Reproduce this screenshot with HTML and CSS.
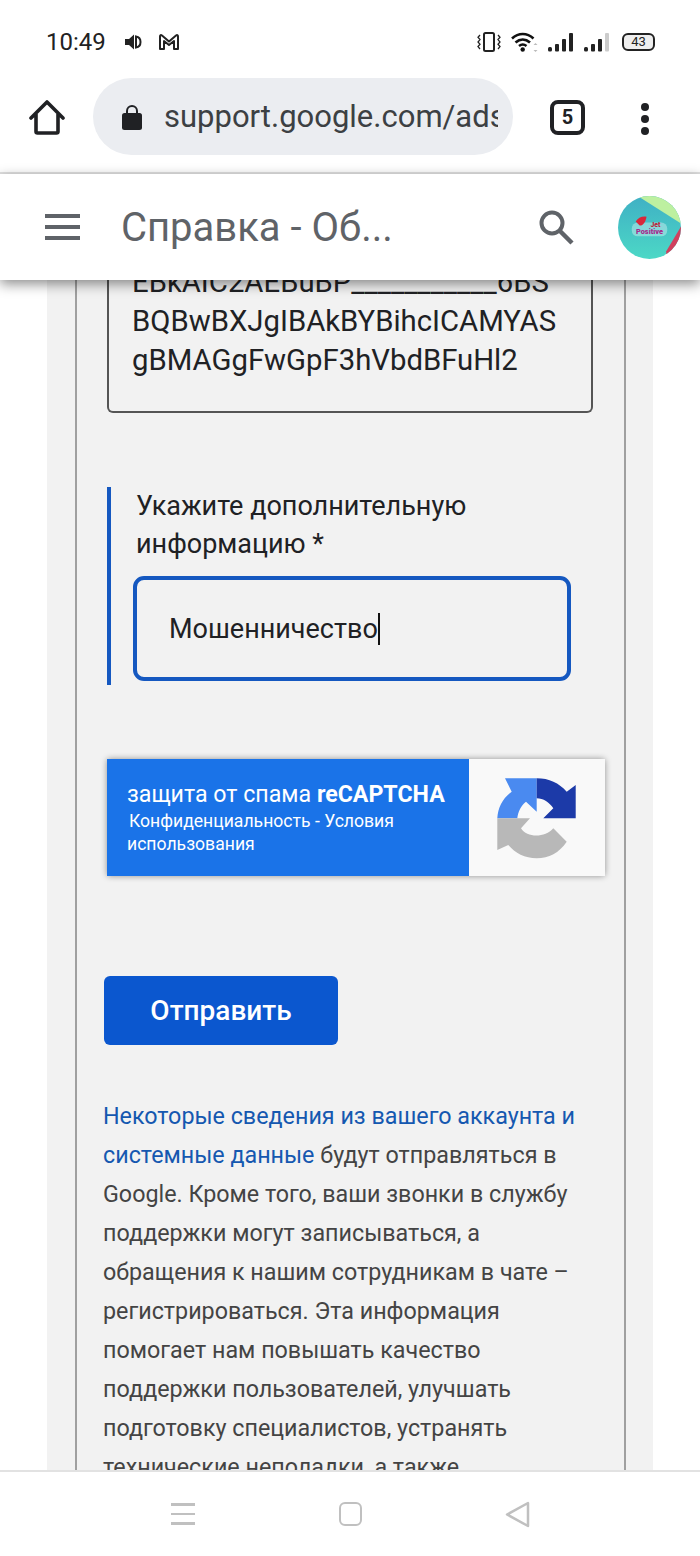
FILE: index.html
```html
<!DOCTYPE html>
<html lang="ru">
<head>
    <meta charset="UTF-8">
    <meta name="viewport" content="width=device-width, initial-scale=1.0">
    <title>Справка</title>
    <link rel="stylesheet" href="styles.css">
</head>
<body>
    <div class="phone">
        <!-- Status bar -->
        <div class="status-bar">
            <span class="time">10:49</span>
            <svg class="ic-sound" viewBox="0 0 18 18"><path d="M0 6h4l5-4.500v15L4 12H0z" fill="#222"/><path d="M11 3.500c6 1 6 10 0 11z" fill="none" stroke="#222" stroke-width="2"/></svg>
            <svg class="ic-gmail" viewBox="0 0 22 18"><path d="M2 16V3.500c0-1.500 1-1.700 2-1l7 6 7-6c1-.7 2-.5 2 1V16h-4V8l-5 4-5-4v8z" fill="none" stroke="#222" stroke-width="2" stroke-linejoin="round"/></svg>
            <span class="status-right">
                <svg class="ic-vibrate" viewBox="0 0 24 20"><rect x="7" y="1" width="10" height="18" rx="1.500" fill="none" stroke="#222" stroke-width="2"/><path d="M3 3l-2 2.300 2 2.300-2 2.400 2 2.300-2 2.300 2 2.400M21 3l2 2.300-2 2.300 2 2.400-2 2.300 2 2.300-2 2.400" fill="none" stroke="#222" stroke-width="1.300"/></svg>
                <svg class="ic-wifi" viewBox="0 0 27 20"><path d="M1 6.500c6.500-6 15-6 21.500 0M4.500 10.500c4.500-4 10-4 14.500 0M8 14c2.500-2 5-2 7.500 0" fill="none" stroke="#111" stroke-width="2.600"/><circle cx="11.700" cy="17.500" r="2.200" fill="#111"/><path d="M24.500 11l-2 2h4zM24.500 20l-2-2h4z" fill="#bbb"/></svg>
                <svg class="ic-signal" viewBox="0 0 26 20"><rect x="0" y="15" width="4" height="4.500" rx="1.500" fill="#222"/><rect x="7" y="12" width="4" height="7.500" rx="1" fill="#222"/><rect x="14" y="7" width="4" height="12.500" rx="1" fill="#222"/><rect x="21" y="1" width="4" height="18.500" rx="1" fill="#222"/></svg>
                <svg class="ic-signal" viewBox="0 0 26 20"><rect x="0" y="15" width="4" height="4.500" rx="1.500" fill="#222"/><rect x="7" y="12" width="4" height="7.500" rx="1" fill="#222"/><rect x="14" y="7" width="4" height="12.500" rx="1" fill="#222"/><rect x="21" y="1" width="4" height="18.500" rx="1" fill="#ccc"/></svg>
                <span class="battery">43</span>
            </span>
        </div>

        <!-- Browser toolbar -->
        <div class="toolbar">
            <svg class="ic-home" viewBox="0 0 36 36"><path d="M2 18L18 2l16 16M7 14v17.500c0 1 .5 1.500 1.500 1.500h19c1 0 1.500-.5 1.500-1.500V14" fill="none" stroke="#202124" stroke-width="3.600" stroke-linejoin="round" stroke-linecap="round"/></svg>
            <div class="omnibox">
                <svg class="ic-lock" viewBox="0 0 20 26"><path d="M5 11V7a5 5 0 0 1 10 0v4" fill="none" stroke="#202124" stroke-width="2"/><rect x="0" y="9" width="20" height="17" rx="2.500" fill="#202124"/></svg>
                <span class="url">support.google.com/ads</span>
            </div>
            <span class="tabs-count">5</span>
            <span class="dots"><i></i><i></i><i></i></span>
        </div>

        <!-- Help center header -->
        <header class="app-bar">
            <span class="burger"><i></i><i></i><i></i></span>
            <span class="app-title">Справка - Об...</span>
            <svg class="ic-search" viewBox="0 0 36 36"><circle cx="14" cy="14" r="10.500" fill="none" stroke="#5f6368" stroke-width="4"/><path d="M22 22l12 12" stroke="#5f6368" stroke-width="4.500"/></svg>
            <div class="avatar">
                <svg viewBox="0 0 64 64"><defs><linearGradient id="ava" x1="0" y1="0" x2="0" y2="1"><stop offset="0" stop-color="#3fb0c4"/><stop offset="1" stop-color="#4cd8c6"/></linearGradient></defs><rect width="64" height="64" fill="url(#ava)"/><path d="M20 0h44v28z" fill="#bdf0a0"/><path d="M64 31v33H49v-8z" fill="#d0405e"/><rect x="14" y="27" width="36" height="14" rx="6" fill="#fff" fill-opacity=".35"/><path d="M18 26c2-4 7-6 11-5-1 5-3 9-7 9z" fill="#d8283a"/><text x="33" y="31" class="logo-jet">Jet</text><text x="32" y="39" class="logo-pos">Positive</text></svg>
            </div>
        </header>

        <main class="content">
            <div class="panel">
                <div class="frame">
                    <div class="url-box">EBkAIC2AEBuBP___________6BS<br>BQBwBXJgIBAkBYBihcICAMYAS<br>gBMAGgFwGpF3hVbdBFuHl2</div>

                    <div class="field">
                        <label class="field-label">Укажите дополнительную информацию *</label>
                        <div class="input">Мошенничество<span class="caret"></span></div>
                    </div>

                    <div class="recaptcha">
                        <div class="recaptcha-text">
                            <div class="recaptcha-title">защита от спама <b>reCAPTCHA</b></div>
                            <div class="recaptcha-links"><span class="first-link">Конфиденциальность - Условия</span><br>использования</div>
                        </div>
                        <div class="recaptcha-logo">
                            <svg viewBox="0 0 80 81">
                                <path d="M.3 40.300C1 29 6 20 14.700 13.700L8 .3h31.700v33.400L29 23.700c-5 4-8 10-8.700 16.600z" fill="#4a8af0"/>
                                <path d="M39.700.3C52 .3 62 5 69.700 13.700L78.700 7v33.300H46.300l10-10c-4-6-10-10-16.600-10z" fill="#1c3aa8"/>
                                <path d="M.3 40.300H33L24 50.300C30 60 48 60 56.300 50.300l13.400 13.400C62 75 52 80.300 39.700 80.300 28 80.300 18 75 11.300 67L.3 72z" fill="#b8b8b8"/>
                            </svg>
                        </div>
                    </div>

                    <button class="submit">Отправить</button>

                    <p class="note"><a href="#">Некоторые сведения из вашего аккаунта и системные данные</a> будут отправляться в Google. Кроме того, ваши звонки в службу поддержки могут записываться, а обращения к нашим сотрудникам в чате – регистрироваться. Эта информация помогает нам повышать качество поддержки пользователей, улучшать подготовку специалистов, устранять технические неполадки, а также</p>
                </div>
            </div>
        </main>

        <!-- Android nav -->
        <nav class="nav-bar">
            <span class="nav-menu"><i></i><i></i><i></i></span>
            <span class="nav-square"></span>
            <svg class="nav-back" viewBox="0 0 25 27"><path d="M23 2v23L2 13.500z" fill="none" stroke="#c0c0c0" stroke-width="2.500" stroke-linejoin="round"/></svg>
        </nav>
    </div>
</body>
</html>
```

FILE: styles.css
```css
* {
    margin: 0;
    padding: 0;
    box-sizing: border-box;
    font-family: Roboto, Arial, sans-serif;
}

body {
    background: white;
}

.phone {
    width: 700px;
    height: 1556px;
    display: flex;
    flex-direction: column;
    overflow: hidden;
}

/* status bar */
.status-bar {
    height: 78px;
    flex-shrink: 0;
    display: flex;
    align-items: center;
    padding: 6px 45px 0 46px;
    color: #222;
}

.time {
    font-size: 24px;
    width: 79px;
}

.ic-sound {
    width: 18px;
    height: 18px;
}

.ic-gmail {
    width: 22px;
    height: 18px;
    margin-left: 15px;
}

.status-right {
    margin-left: auto;
    display: flex;
    align-items: center;
}

.ic-vibrate {
    width: 24px;
    height: 20px;
}

.ic-wifi {
    width: 27px;
    height: 20px;
    margin-left: 10px;
}

.ic-signal {
    width: 26px;
    height: 20px;
    margin-left: 10px;
}

.battery {
    width: 33px;
    height: 18px;
    margin-left: 12px;
    border: 2px solid #222;
    border-radius: 6px;
    background: #eee;
    font-size: 13px;
    line-height: 14px;
    text-align: center;
}

/* browser toolbar */
.toolbar {
    height: 96px;
    flex-shrink: 0;
    display: flex;
    align-items: flex-start;
    border-bottom: 2px solid #e2e2e2;
    position: relative;
}

.ic-home {
    width: 36px;
    height: 36px;
    margin: 22px 0 0 29px;
}

.omnibox {
    width: 420px;
    height: 77px;
    margin-left: 28px;
    background: #ebedf1;
    border-radius: 39px;
    display: flex;
    align-items: center;
    padding-left: 29px;
}

.ic-lock {
    width: 20px;
    height: 26px;
    flex-shrink: 0;
}

.url {
    width: 334px;
    margin-left: 22px;
    font-size: 31px;
    color: #3c4043;
    overflow: hidden;
    white-space: nowrap;
}

.tabs-count {
    width: 35px;
    height: 35px;
    margin: 22px 0 0 37px;
    border: 4px solid #202124;
    border-radius: 8px;
    font-size: 20px;
    font-weight: 700;
    line-height: 27px;
    text-align: center;
    color: #202124;
}

.dots {
    display: flex;
    flex-direction: column;
    gap: 4px;
    margin: 25px 0 0 56px;
}

.dots i {
    width: 8px;
    height: 8px;
    border-radius: 50%;
    background: #202124;
}

/* help center header */
.app-bar {
    height: 106px;
    flex-shrink: 0;
    display: flex;
    align-items: center;
    background: white;
    box-shadow: 0 4px 12px rgba(0, 0, 0, 0.45);
    position: relative;
    z-index: 2;
}

.burger {
    display: flex;
    flex-direction: column;
    gap: 7px;
    margin-left: 45px;
}

.burger i {
    width: 35px;
    height: 4px;
    background: #5f6368;
}

.app-title {
    width: 417px;
    margin-left: 41px;
    font-size: 40px;
    color: #5f6368;
}

.ic-search {
    width: 36px;
    height: 36px;
}

.avatar {
    width: 63px;
    height: 63px;
    margin-left: 44px;
    border-radius: 50%;
    overflow: hidden;
}

.logo-jet {
    font-size: 7px;
    font-weight: 900;
    fill: #b8283c;
}

.logo-pos {
    font-size: 7.5px;
    font-weight: 900;
    fill: #a8288c;
    text-anchor: middle;
}

/* page content */
.content {
    flex: 1;
    overflow: hidden;
}

.panel {
    margin: 0 47px;
    height: 100%;
    background: #f2f2f2;
    padding: 0 27px 0 28px;
}

.frame {
    height: 1300px;
    overflow: hidden;
    border: solid #a0a0a0;
    border-width: 0 2px;
    padding: 0 31px 0 30px;
    color: #202124;
}

.url-box {
    width: 486px;
    margin-top: -17px;
    padding: 0 0 31px 23px;
    border: 2px solid #555;
    border-top: none;
    border-radius: 0 0 6px 6px;
    font-size: 29.3px;
    line-height: 39px;
}

.field {
    width: 465px;
    margin-top: 75px;
    border-left: 4px solid #1558c0;
    padding: 0 0 4px 25px;
}

.field-label {
    display: block;
    font-size: 27px;
    line-height: 38px;
    margin: -1px 0 13px;
}

.input {
    width: 438px;
    height: 105px;
    margin-left: -3px;
    border: 4px solid #1558c0;
    border-radius: 11px;
    padding-left: 32px;
    font-size: 27px;
    display: flex;
    align-items: center;
}

.caret {
    width: 2px;
    height: 32px;
    background: #111;
}

.recaptcha {
    width: 498px;
    height: 117px;
    margin-top: 74px;
    display: flex;
    box-shadow: 0 0 6px rgba(0, 0, 0, 0.4);
    border-radius: 2px;
}

.recaptcha-text {
    width: 362px;
    background: #1a73e8;
    color: white;
    padding: 21px 0 0 20px;
}

.recaptcha-title {
    font-size: 23.2px;
    line-height: 28px;
}

.recaptcha-links {
    margin-top: 2px;
    font-size: 17.6px;
    line-height: 23px;
}

.first-link {
    margin-left: 2px;
}

.recaptcha-logo {
    flex: 1;
    background: #f9f9f9;
    padding: 19px 0 0 28px;
}

.recaptcha-logo svg {
    display: block;
    width: 80px;
    height: 81px;
}

.submit {
    display: block;
    width: 234px;
    height: 69px;
    margin: 100px 0 0 -3px;
    background: #0b57cf;
    border: none;
    border-radius: 6px;
    color: white;
    font-size: 28px;
    font-weight: 500;
}

.note {
    width: 490px;
    margin: 52px 0 0 -4px;
    font-size: 23.3px;
    line-height: 39px;
    color: #444;
}

.note a {
    color: #1558b0;
    text-decoration: none;
}

/* android nav */
.nav-bar {
    height: 86px;
    flex-shrink: 0;
    background: white;
    border-top: 2px solid #e2e2e2;
    position: relative;
    z-index: 2;
    display: flex;
    align-items: flex-start;
    padding: 30px 0 0 171px;
}

.nav-menu {
    display: flex;
    flex-direction: column;
    gap: 7px;
    margin-top: 1px;
}

.nav-menu i {
    width: 24px;
    height: 2.5px;
    background: #c0c0c0;
}

.nav-square {
    width: 23px;
    height: 24px;
    margin-left: 144px;
    border: 2.5px solid #c0c0c0;
    border-radius: 6px;
}

.nav-back {
    width: 25px;
    height: 27px;
    margin: -1px 0 0 143px;
}
```
